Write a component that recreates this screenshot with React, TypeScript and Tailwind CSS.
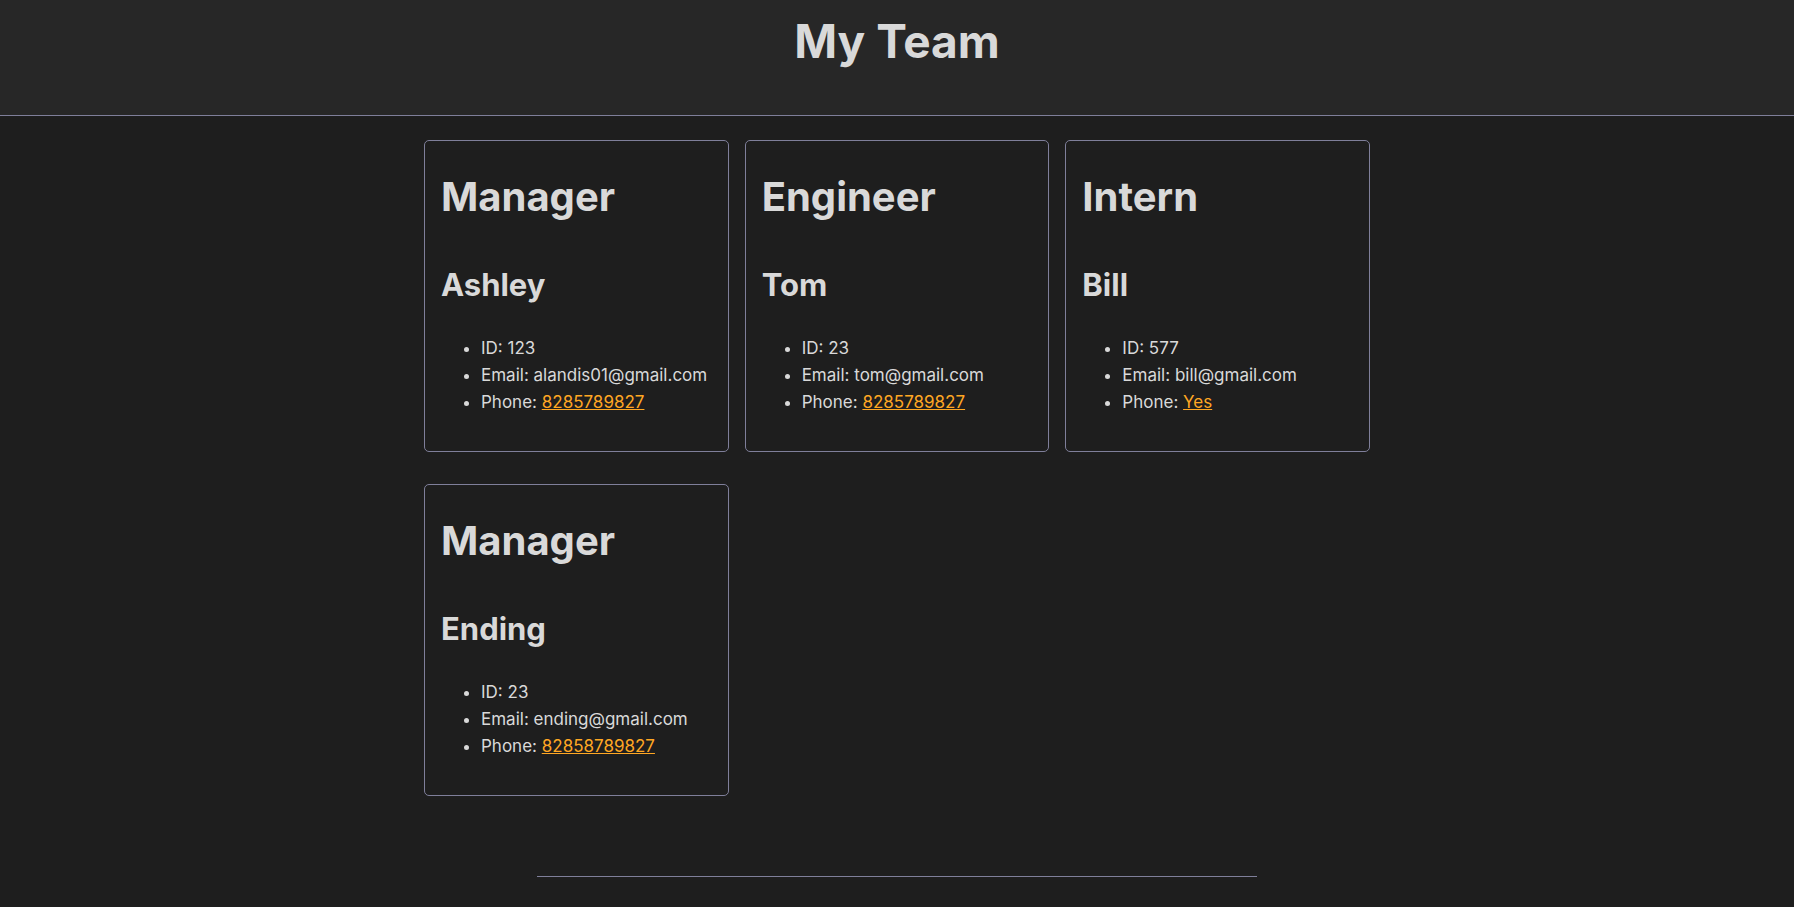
type Member = { role: string; name: string; id: string; email: string; phone: string };

const team: Member[] = [
  { role: "Manager", name: "Ashley", id: "123", email: "alandis01@gmail.com", phone: "8285789827" },
  { role: "Engineer", name: "Tom", id: "23", email: "tom@gmail.com", phone: "8285789827" },
  { role: "Intern", name: "Bill", id: "577", email: "bill@gmail.com", phone: "Yes" },
  { role: "Manager", name: "Ending", id: "23", email: "ending@gmail.com", phone: "82858789827" },
];

function Card({ member }: { member: Member }) {
  return (
    <section className="rounded-[5px] border border-[#7f7f9a] p-4">
      <h2 className="mt-4 text-[40px] leading-[48px] font-bold">{member.role}</h2>
      <h3 className="mt-[46px] text-[31px] leading-[36px] font-bold">{member.name}</h3>
      <ul className="mt-8 mb-[19px] list-disc pl-10 text-[17px] leading-[27px]">
        <li>ID: {member.id}</li>
        <li className="whitespace-nowrap">Email: {member.email}</li>
        <li>
          Phone:{" "}
          <a href={`tel:${member.phone}`} className="text-[#ffa723] underline">
            {member.phone}
          </a>
        </li>
      </ul>
    </section>
  );
}

export default function App() {
  return (
    <div className="min-h-screen bg-[#1e1e1e] font-['Inter','Liberation_Sans',sans-serif] text-[#d9d9d9]">
      <header className="border-b border-[#7f7f9a] bg-[#272727] px-4 pt-4 pb-12 text-center">
        <h1 className="text-[46px] leading-[51px] font-bold">My Team</h1>
      </header>
      <main className="mx-auto grid max-w-[946px] grid-cols-1 gap-x-4 gap-y-8 pt-6 sm:grid-cols-2 lg:grid-cols-3">
        {team.map((member) => (
          <Card key={member.name} member={member} />
        ))}
      </main>
      <footer className="mx-auto mt-20 max-w-[720px] border-t border-[#7f7f9a]" />
    </div>
  );
}
